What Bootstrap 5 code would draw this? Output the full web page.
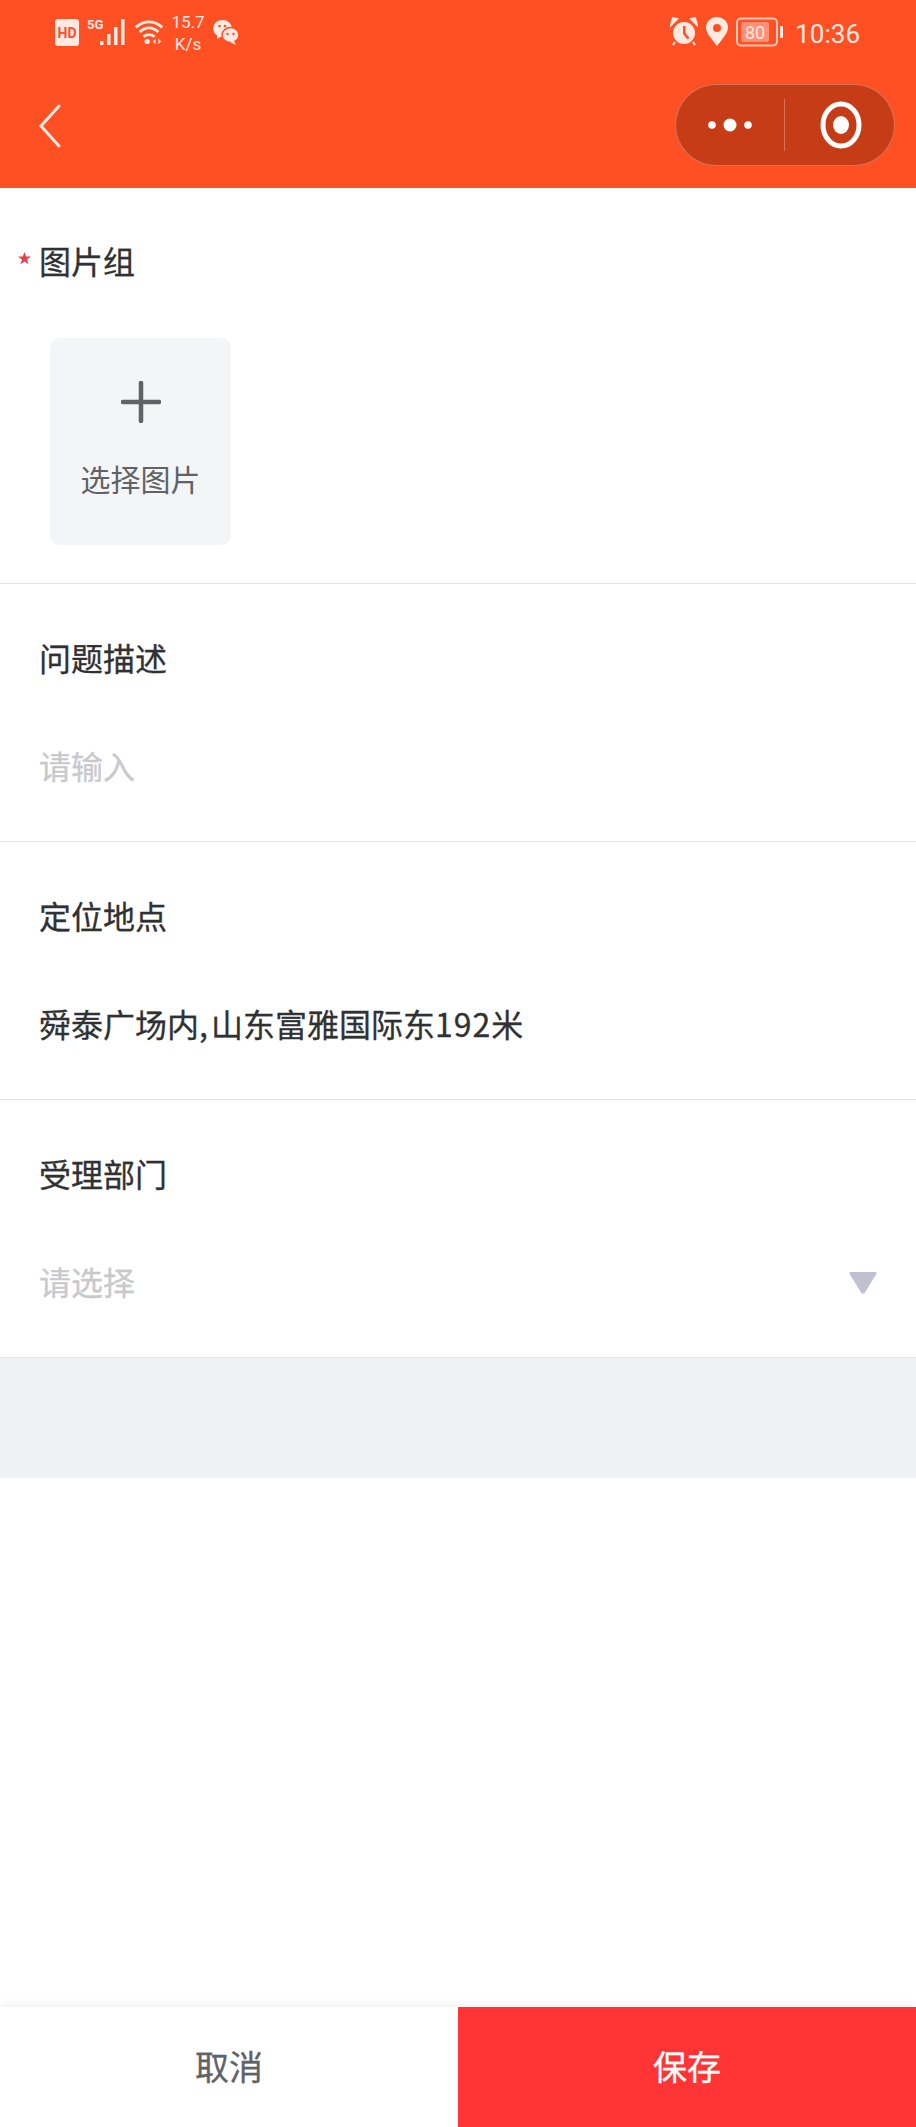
<!DOCTYPE html>
<html lang="zh-CN">
<head>
<meta charset="utf-8">
<title>图片组</title>
<link href="https://cdn.jsdelivr.net/npm/bootstrap@5.3.0/dist/css/bootstrap.min.css" rel="stylesheet">
<style>
    html, body { height: 100%; }
    body {
        font-family: "Noto Sans CJK SC", "Liberation Sans", sans-serif;
        color: #303133;
        background: #fff;
    }
    .page-wrap { height: 2127px; }

    /* header */
    .top-head { background: #ff5023; height: 188px; color: #ffe9e0; }
    .status-row { height: 66px; padding: 15px 56px 0 55px; font-family: Roboto, sans-serif; }
    .status-row svg { display: block; flex: none; }
    .low-icon { margin-top: 3px; }
    .net-speed { width: 38px; margin-left: 6px; margin-right: 6px; font-size: 17px; line-height: 22px; text-align: center; margin-top: -4px; }
    .right-icons { margin-top: 2px; }
    .clock { font-size: 26px; line-height: 1; margin-left: 12px; margin-top: 6px; }
    .nav-row { height: 122px; padding: 18px 21px 22px 39px; }
    .back-arrow { margin-top: 2px; }
    .capsule {
        width: 220px; height: 82px;
        background: #c63c17;
        border: 1px solid rgba(255, 255, 255, .28);
        border-radius: 41px;
    }
    .capsule-part { width: 110px; }
    .capsule-part.ring-side { padding-left: 3px; }
    .capsule-line { width: 1px; height: 52px; background: rgba(255, 255, 255, .28); }

    /* form */
    .form-block { height: 258px; border-bottom: 1px solid #e4e5e8; padding: 51px 28px 0 39px; }
    .form-block.first { height: 396px; padding-top: 50px; position: relative; }
    .field-label { font-size: 32px; line-height: 44px; color: #303133; -webkit-text-stroke: .3px; }
    .field-value { font-size: 32px; line-height: 44px; margin-top: 64px; color: #303133; -webkit-text-stroke: .3px; }
    .field-value.empty { color: #c8c9cc; }
    .comma-part { letter-spacing: 3px; }
    .num-part { letter-spacing: 1px; }
    .must-mark { position: absolute; left: 18px; top: 64px; width: 13px; height: 13px; }
    .pick-tile {
        width: 181px; height: 207px;
        margin-top: 56px; margin-left: 11px;
        background: #f4f5f7;
        border-radius: 10px;
        color: #606266;
        font-size: 30px;
        line-height: 40px;
    }
    .pick-tile svg { margin-top: 43px; margin-bottom: 35px; }
    .drop-arrow { margin-right: 10px; margin-top: 4px; }
    .gray-band { height: 120px; background: #f0f1f4; }

    /* bottom buttons */
    .foot-bar { height: 120px; box-shadow: 0 -3px 8px rgba(0, 0, 0, .06); }
    .foot-btn { border-radius: 0; border: 0; width: 50%; font-size: 34px; padding: 0 0 4px; -webkit-text-stroke: .3px; }
    .foot-btn.cancel { background: #fff; color: #606266; }
    .foot-btn.save { background: #ff3535; color: #fff; }
</style>
</head>
<body>
<div class="page-wrap d-flex flex-column">
    <header class="top-head">
        <div class="status-row d-flex align-items-start">
            <svg width="24" height="27" viewBox="0 0 24 27" class="mt-1"><rect width="24" height="27" rx="3" fill="#ffe9e0"/><text x="12" y="19" font-size="14" font-weight="700" font-family="Roboto, sans-serif" text-anchor="middle" fill="#ff5023">HD</text></svg>
            <svg width="40" height="30" viewBox="0 0 40 30" class="ms-2 low-icon" fill="#ffe9e0"><text x="0" y="11" font-size="13" font-weight="700" font-family="Roboto, sans-serif">5G</text><rect x="13" y="23" width="3.500" height="4"/><rect x="20" y="16" width="3.500" height="11"/><rect x="27" y="9" width="3.500" height="18"/><rect x="34" y="1" width="3.500" height="26"/></svg>
            <svg width="28" height="30" viewBox="0 0 30 30" class="ms-2 low-icon" fill="none" stroke="#ffe9e0" stroke-width="3"><path d="M1 9 C9 1 21 1 29 9"/><path d="M5 14 C11 8 19 8 25 14"/><path d="M9 19 C12 16 18 16 21 19"/><circle cx="13" cy="24" r="2.800" fill="#ffe9e0" stroke="none"/><path d="M22 21 l-3 3 3 3z M25 21 l3 3 -3 3z" fill="#ffe9e0" stroke="none"/></svg>
            <div class="net-speed">15.7<br>K/s</div>
            <svg width="26" height="26" viewBox="0 0 26 26" class="mt-1" fill="#ffe9e0"><ellipse cx="9.500" cy="9.500" rx="9.500" ry="8.500"/><path d="M4 15 l0 5 5 -3z"/><ellipse cx="17.500" cy="16" rx="8.500" ry="7.500" stroke="#ff5023" stroke-width="1.500"/><path d="M21 22 l2 4 -6 -3z"/><circle cx="6.500" cy="7" r="1.300" fill="#ff5023"/><circle cx="12" cy="7" r="1.300" fill="#ff5023"/><circle cx="14.500" cy="15" r="1.200" fill="#ff5023"/><circle cx="20.500" cy="15" r="1.200" fill="#ff5023"/></svg>
            <div class="ms-auto d-flex align-items-start">
                <svg width="28" height="30" viewBox="0 0 28 30" class="right-icons" fill="#ffe9e0"><circle cx="14" cy="16" r="11"/><path d="M13 9 h2.500 v7 l4 5 -2 1.500 -4.500 -5.500z" fill="#ff5023"/><path d="M1 8 L7 2 L3 1z M27 8 L21 2 L25 1z M5 25 l-2 3 M23 25 l2 3" stroke="#ffe9e0" stroke-width="2"/></svg>
                <svg width="22" height="30" viewBox="0 0 22 30" class="ms-2 right-icons"><path d="M11 29 C5 21 0 16 0 10.500 A11 10.500 0 0 1 22 10.500 C22 16 17 21 11 29z" fill="#ffe9e0"/><circle cx="11" cy="11" r="4" fill="#ff5023"/></svg>
                <svg width="47" height="30" viewBox="0 0 47 30" class="ms-2 right-icons"><rect x="1" y="1.500" width="40" height="27" rx="4" fill="none" stroke="#ffc9b5" stroke-width="2"/><rect x="5" y="5" width="28" height="20" rx="2" fill="#ff8f75"/><rect x="44" y="9" width="3" height="12" rx="1" fill="#ffe9e0"/><text x="19" y="22" font-size="18" font-family="Roboto, sans-serif" text-anchor="middle" fill="#ffe9e0">80</text></svg>
                <div class="clock">10:36</div>
            </div>
        </div>
        <div class="nav-row d-flex justify-content-between align-items-center">
            <svg class="back-arrow" width="22" height="44" viewBox="0 0 22 44" fill="none" stroke="#ffe9e0" stroke-width="3" stroke-linecap="round"><path d="M20 2 L2 22 L20 42"/></svg>
            <div class="capsule d-flex align-items-center">
                <div class="capsule-part d-flex justify-content-center align-items-center">
                    <svg width="44" height="16" viewBox="0 0 44 16" fill="#fff"><circle cx="4" cy="8" r="3.800"/><circle cx="22" cy="8" r="6.500"/><circle cx="40" cy="8" r="3.800"/></svg>
                </div>
                <div class="capsule-line"></div>
                <div class="capsule-part ring-side d-flex justify-content-center align-items-center">
                    <svg width="42" height="48" viewBox="0 0 42 48"><ellipse cx="21" cy="24" rx="18" ry="21" fill="none" stroke="#fff" stroke-width="5"/><ellipse cx="21" cy="24" rx="8" ry="9" fill="#fff"/></svg>
                </div>
            </div>
        </div>
    </header>

    <section class="form-block first">
        <svg class="must-mark" viewBox="0 0 20 20"><path d="M10 0 L12.600 7 L20 7 L14 11.500 L16.200 19 L10 14.500 L3.800 19 L6 11.500 L0 7 L7.400 7z" fill="#e5404b"/></svg>
        <div class="field-label">图片组</div>
        <div class="pick-tile d-flex flex-column align-items-center">
            <svg width="40" height="42" viewBox="0 0 40 42" fill="none" stroke="#606266" stroke-width="4.500" stroke-linecap="round"><path d="M20 2 V40 M2 21 H38"/></svg>
            <div>选择图片</div>
        </div>
    </section>

    <section class="form-block">
        <div class="field-label">问题描述</div>
        <div class="field-value empty">请输入</div>
    </section>

    <section class="form-block">
        <div class="field-label">定位地点</div>
        <div class="field-value">舜泰广场内<span class="comma-part">,</span>山东富雅国际东<span class="num-part">192</span>米</div>
    </section>

    <section class="form-block">
        <div class="field-label">受理部门</div>
        <div class="field-value empty d-flex justify-content-between align-items-center">
            <span>请选择</span>
            <svg class="drop-arrow" width="30" height="24" viewBox="0 0 30 24"><path d="M3 1 H27 Q29.500 1 28 3.500 L17 21.500 Q15 24 13 21.500 L2 3.500 Q.5 1 3 1z" fill="#c0c1d0"/></svg>
        </div>
    </section>

    <div class="gray-band"></div>

    <footer class="foot-bar d-flex mt-auto">
        <button type="button" class="btn foot-btn cancel">取消</button>
        <button type="button" class="btn foot-btn save">保存</button>
    </footer>
</div>
<script src="https://cdn.jsdelivr.net/npm/bootstrap@5.3.0/dist/js/bootstrap.bundle.min.js"></script>
</body>
</html>
